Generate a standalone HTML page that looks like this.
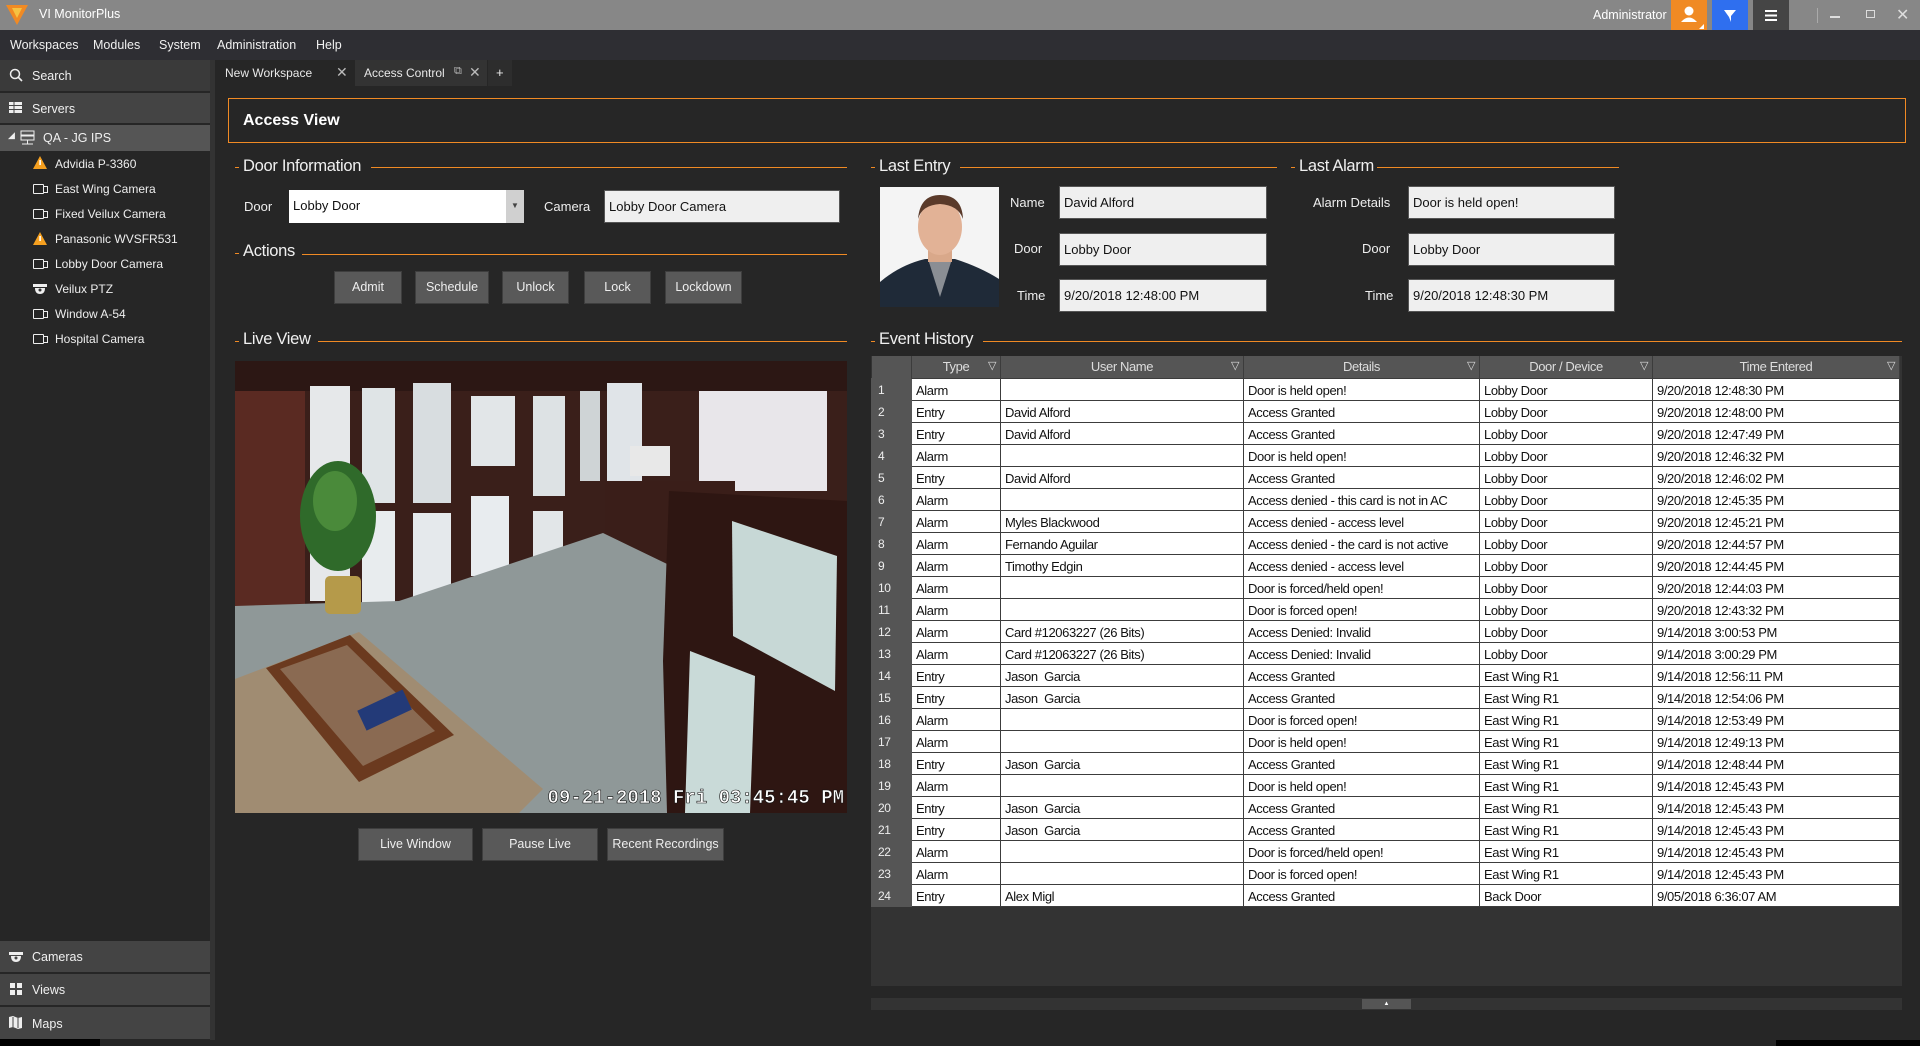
<!DOCTYPE html>
<html><head><meta charset="utf-8">
<style>
*{margin:0;padding:0;box-sizing:border-box}
body{width:1920px;height:1046px;overflow:hidden;background:#262626;font-family:"Liberation Sans",Arial,sans-serif;color:#e8e8e8;position:relative}
.a{position:absolute}
.title{left:0;top:0;width:1920px;height:30px;background:#878787}
.menu{left:0;top:30px;width:1920px;height:30px;background:#2e2e33;font-size:12.5px}
.menu span{position:absolute;top:8px;color:#f0f0f0}
.side{left:0;top:60px;width:210px;height:980px;background:#262626}
.sitem{position:absolute;left:0;width:210px;background:#444;font-size:12.5px;color:#f0f0f0}
.tree{position:absolute;left:55px;font-size:12px;color:#eee}
.ticon{position:absolute;left:33px;width:11px;height:10px;border:1.5px solid #eee;border-radius:1px}
.ticon:after{content:"";position:absolute;left:10px;top:1px;width:3px;height:5px;border:1.5px solid #eee;border-left:none}
.head{font-size:16.5px;color:#f0f0f0;letter-spacing:-0.3px}
.oline{height:1px;background:#f08a24}
.inp{background:#efefef;color:#111;font-size:13px;padding-left:4px;border:1px solid #555}
.btn{background:#595959;border:1px solid #3e3e3e;color:#eee;font-size:12.5px;text-align:center}
.lbl{font-size:13px;color:#eee}
table{border-collapse:collapse;font-size:13px;letter-spacing:-0.4px}
td{height:22px;background:#fff;color:#111;border:1px solid #3c3c3c;padding:2px 4px 0;white-space:nowrap;overflow:hidden}
td.n{background:#555;color:#eee;border-color:#555;padding-left:6px;font-size:12px}
th{height:22px;background:#555;color:#ddd;font-weight:normal;border-right:1px solid #3c3c3c;position:relative}
th i{position:absolute;right:4px;top:3px;font-style:normal;font-size:11px;color:#ddd}
</style></head><body>

<div class="a title">
 <svg class="a" style="left:5px;top:4px" width="24" height="22" viewBox="0 0 24 22"><path d="M1 1 L23 1 L12 21 Z" fill="#f08a24"/><path d="M7 4 L17 4 L12 14 Z" fill="#f5c242"/></svg>
 <span class="a" style="left:39px;top:7px;font-size:12.5px;color:#fff">VI MonitorPlus</span>
 <span class="a" style="left:1593px;top:8px;font-size:12.5px;color:#fff">Administrator</span>
 <div class="a" style="left:1671px;top:0;width:36px;height:30px;background:#f08a24"><svg width="36" height="30"><circle cx="18" cy="11" r="4.5" fill="#fff"/><path d="M10 22 Q18 13 26 22Z" fill="#fff"/><path d="M33 24 L33 29 L28 29Z" fill="#fff"/></svg></div>
 <div class="a" style="left:1712px;top:0;width:36px;height:30px;background:#2f6fef"><svg width="36" height="30"><path d="M12 10 L24 10 L19 16 L19 22 L17 17Z" fill="#fff"/></svg></div>
 <div class="a" style="left:1753px;top:0;width:36px;height:30px;background:#454545"><svg width="36" height="30"><rect x="12" y="10" width="12" height="2" fill="#fff"/><rect x="12" y="14.5" width="12" height="2" fill="#fff"/><rect x="12" y="19" width="12" height="2" fill="#fff"/></svg></div>
 <div class="a" style="left:1817px;top:8px;width:1px;height:15px;background:#aaa"></div>
 <div class="a" style="left:1830px;top:16px;width:10px;height:2px;background:#ddd"></div>
 <div class="a" style="left:1866px;top:10px;width:9px;height:8px;border:1.5px solid #ddd"></div>
 <span class="a" style="left:1896px;top:5px;font-size:16px;color:#ddd">✕</span>
</div>

<div class="a menu">
 <span style="left:10px">Workspaces</span><span style="left:93px">Modules</span><span style="left:159px">System</span><span style="left:217px">Administration</span><span style="left:316px">Help</span>
</div>

<div class="a side">
 <div class="sitem" style="top:0;height:31px;background:#3a3a3a"><svg class="a" style="left:9px;top:8px" width="14" height="14"><circle cx="6" cy="6" r="4.5" stroke="#eee" stroke-width="1.5" fill="none"/><path d="M9 9 L13 13" stroke="#eee" stroke-width="1.6"/></svg><span class="a" style="left:32px;top:9px">Search</span></div>
 <div class="sitem" style="top:33px;height:30px"><svg class="a" style="left:9px;top:9px" width="13" height="11"><rect width="13" height="11" fill="#eee"/><path d="M0 3.5H13M0 7.5H13M5 0V11" stroke="#444" stroke-width="1"/></svg><span class="a" style="left:32px;top:9px">Servers</span></div>
 <div class="sitem" style="top:65px;height:26px;background:#555"><span class="a" style="left:8px;top:5px;font-size:9px">◢</span><svg class="a" style="left:20px;top:5px" width="16" height="16"><rect x="1" y="1" width="13" height="4" fill="none" stroke="#eee"/><rect x="1" y="6" width="13" height="4" fill="none" stroke="#eee"/><path d="M7.5 10V14M2 14H13" stroke="#eee"/></svg><span class="a" style="left:43px;top:6px">QA - JG IPS</span></div>
</div>
<svg class="a" style="left:33px;top:156px" width="14" height="13"><path d="M7 0 L14 13 L0 13Z" fill="#f5a020"/><rect x="6.3" y="4" width="1.6" height="5" fill="#fff"/></svg>
<span class="tree" style="top:157px">Advidia P-3360</span>
<div class="ticon" style="top:184px"></div><span class="tree" style="top:182px">East Wing Camera</span>
<div class="ticon" style="top:209px"></div><span class="tree" style="top:207px">Fixed Veilux Camera</span>
<svg class="a" style="left:33px;top:232px" width="14" height="13"><path d="M7 0 L14 13 L0 13Z" fill="#f5a020"/><rect x="6.3" y="4" width="1.6" height="5" fill="#fff"/></svg>
<span class="tree" style="top:232px">Panasonic WVSFR531</span>
<div class="ticon" style="top:259px"></div><span class="tree" style="top:257px">Lobby Door Camera</span>
<svg class="a" style="left:33px;top:284px" width="14" height="10"><rect width="14" height="3" fill="#eee"/><path d="M2 4 H12 Q12 10 7 10 Q2 10 2 4Z" fill="#eee"/><circle cx="7" cy="6" r="1.5" fill="#333"/></svg>
<span class="tree" style="top:282px">Veilux PTZ</span>
<div class="ticon" style="top:309px"></div><span class="tree" style="top:307px">Window A-54</span>
<div class="ticon" style="top:334px"></div><span class="tree" style="top:332px">Hospital Camera</span>

<div class="a" style="left:210px;top:60px;width:5px;height:980px;background:#333"></div>
<div class="sitem" style="top:941px;height:31px"><svg class="a" style="left:9px;top:11px" width="14" height="10"><rect width="14" height="3" fill="#eee"/><path d="M2 4 H12 Q12 10 7 10 Q2 10 2 4Z" fill="#eee"/><circle cx="7" cy="6" r="1.5" fill="#444"/></svg><span class="a" style="left:32px;top:9px">Cameras</span></div>
<div class="sitem" style="top:974px;height:31px"><svg class="a" style="left:10px;top:9px" width="12" height="12"><rect width="5" height="5" fill="#eee"/><rect x="7" width="5" height="5" fill="#eee"/><rect y="7" width="5" height="5" fill="#eee"/><rect x="7" y="7" width="5" height="5" fill="#eee"/></svg><span class="a" style="left:32px;top:9px">Views</span></div>
<div class="sitem" style="top:1007px;height:32px"><svg class="a" style="left:9px;top:9px" width="13" height="13"><path d="M0 1 L4 0 L9 2 L13 1 L13 12 L9 13 L4 11 L0 12Z" fill="#eee"/><path d="M4 1V11M9 2V12" stroke="#444"/></svg><span class="a" style="left:32px;top:10px">Maps</span></div>
<div class="a" style="left:0;top:1039px;width:100px;height:7px;background:#000"></div>
<div class="a" style="left:1776px;top:1040px;width:144px;height:6px;background:#000"></div>

<div class="a" style="left:215px;top:60px;width:1705px;height:26px;background:#262626"></div>
<div class="a" style="left:215px;top:60px;width:138px;height:26px;background:#262626;font-size:12px"><span class="a" style="left:10px;top:6px">New Workspace</span><span class="a" style="left:121px;top:4px;font-size:14px;color:#bbb">✕</span></div>
<div class="a" style="left:355px;top:60px;width:132px;height:26px;background:#333;font-size:12px"><span class="a" style="left:9px;top:6px">Access Control</span><span class="a" style="left:99px;top:5px;font-size:11px;color:#bbb">⧉</span><span class="a" style="left:114px;top:4px;font-size:14px;color:#bbb">✕</span></div>
<div class="a" style="left:488px;top:60px;width:24px;height:26px;background:#2d2d2d;font-size:13px"><span class="a" style="left:8px;top:5px">+</span></div>

<div class="a" style="left:228px;top:98px;width:1678px;height:45px;border:1px solid #f08a24"><span class="a" style="left:14px;top:13px;font-size:16px;font-weight:bold;color:#fff">Access View</span></div>

<div class="a oline" style="left:235px;top:167px;width:4px"></div>
<span class="a head" style="left:243px;top:157px">Door Information</span>
<div class="a oline" style="left:371px;top:167px;width:476px"></div>
<span class="a lbl" style="left:244px;top:199px">Door</span>
<div class="a inp" style="left:289px;top:190px;width:235px;height:33px;background:#fff;line-height:31px;border:none">Lobby Door</div>
<div class="a" style="left:506px;top:190px;width:18px;height:33px;background:#d0d0d0"><span class="a" style="left:5px;top:11px;font-size:8px;color:#444">▼</span></div>
<span class="a lbl" style="left:544px;top:199px">Camera</span>
<div class="a inp" style="left:604px;top:190px;width:236px;height:33px;line-height:31px">Lobby Door Camera</div>

<div class="a oline" style="left:235px;top:253px;width:4px"></div>
<span class="a head" style="left:243px;top:242px">Actions</span>
<div class="a oline" style="left:302px;top:254px;width:545px"></div>
<div class="a btn" style="left:334px;top:271px;width:68px;height:33px;line-height:31px">Admit</div>
<div class="a btn" style="left:415px;top:271px;width:74px;height:33px;line-height:31px">Schedule</div>
<div class="a btn" style="left:502px;top:271px;width:67px;height:33px;line-height:31px">Unlock</div>
<div class="a btn" style="left:584px;top:271px;width:67px;height:33px;line-height:31px">Lock</div>
<div class="a btn" style="left:665px;top:271px;width:77px;height:33px;line-height:31px">Lockdown</div>

<div class="a oline" style="left:235px;top:341px;width:4px"></div>
<span class="a head" style="left:243px;top:330px">Live View</span>
<div class="a oline" style="left:318px;top:341px;width:529px"></div>

<svg class="a" style="left:235px;top:361px" width="612" height="452" viewBox="0 0 612 452">
 <rect width="612" height="452" fill="#3a1f1a"/>
 <rect x="0" y="0" width="612" height="30" fill="#2c1714"/>
 <rect x="0" y="30" width="70" height="220" fill="#5a2a22"/>
 <rect x="75" y="25" width="40" height="215" fill="#e6e8ea"/>
 <rect x="127" y="27" width="33" height="115" fill="#dfe4e6"/>
 <rect x="127" y="150" width="33" height="100" fill="#e8ecee"/>
 <rect x="178" y="22" width="38" height="120" fill="#d8dde0"/>
 <rect x="178" y="152" width="38" height="90" fill="#e5e9ec"/>
 <rect x="236" y="35" width="44" height="70" fill="#e2e6e8"/>
 <rect x="236" y="135" width="38" height="80" fill="#e8ecef"/>
 <rect x="298" y="35" width="32" height="100" fill="#dde2e4"/>
 <rect x="298" y="150" width="30" height="60" fill="#e2e6e8"/>
 <rect x="345" y="30" width="20" height="90" fill="#cfd4d6"/>
 <rect x="372" y="22" width="35" height="100" fill="#e0e4e8"/>
 <rect x="464" y="30" width="128" height="100" fill="#e8e6ea"/>
 <rect x="395" y="85" width="40" height="30" fill="#e8e8e8"/>
 <rect x="370" y="120" width="130" height="115" fill="#3a1e19"/>
 <polygon points="0,245 164,240 368,172 488,230 436,452 0,452" fill="#8f9898"/>
 <polygon points="0,318 124,271 308,428 284,452 0,452" fill="#a08c72"/>
 <polygon points="31,307 115,274 219,374 124,421" fill="#6b3a1f"/>
 <polygon points="45,308 112,284 200,370 128,405" fill="#8a6a52"/>
 <rect x="125" y="338" width="50" height="22" fill="#233a78" transform="rotate(-25 150 350)"/>
 <polygon points="434,130 612,140 612,452 432,452 428,300" fill="#2e1612"/>
 <polygon points="497,160 602,195 600,330 498,275" fill="#c7d8d6"/>
 <polygon points="455,290 520,315 515,452 450,452" fill="#c9dad8"/>
 <ellipse cx="103" cy="155" rx="38" ry="55" fill="#2f6a2a"/>
 <ellipse cx="100" cy="140" rx="22" ry="30" fill="#4a8a3a"/>
 <rect x="90" y="215" width="36" height="38" rx="5" fill="#b59a4a"/>
 <text x="609" y="442" text-anchor="end" font-family="Liberation Mono,monospace" font-size="19" font-weight="bold" fill="#fff" stroke="#111" stroke-width="0.6">09-21-2018 Fri 03:45:45 PM</text>
</svg>

<div class="a btn" style="left:358px;top:828px;width:115px;height:33px;line-height:31px">Live Window</div>
<div class="a btn" style="left:482px;top:828px;width:116px;height:33px;line-height:31px">Pause Live</div>
<div class="a btn" style="left:607px;top:828px;width:117px;height:33px;line-height:31px">Recent Recordings</div>

<div class="a oline" style="left:871px;top:167px;width:4px"></div>
<span class="a head" style="left:879px;top:157px">Last Entry</span>
<div class="a oline" style="left:960px;top:167px;width:317px"></div>
<svg class="a" style="left:880px;top:187px" width="119" height="120" viewBox="0 0 119 120">
 <rect width="119" height="120" fill="#f4f4f4"/>
 <path d="M0 120 L0 95 Q20 78 45 72 L75 72 Q100 80 119 92 L119 120Z" fill="#1f2a38"/>
 <path d="M48 72 L60 110 L72 72Z" fill="#8a8e94"/>
 <rect x="48" y="55" width="24" height="20" fill="#d9a88a"/>
 <ellipse cx="60" cy="40" rx="22" ry="28" fill="#e2b296"/>
 <path d="M38 32 Q40 8 60 8 Q82 8 83 32 Q78 18 60 17 Q42 18 38 32Z" fill="#5a3a2a"/>
</svg>
<span class="a lbl" style="left:1010px;top:195px">Name</span>
<div class="a inp" style="left:1059px;top:186px;width:208px;height:33px;line-height:31px">David Alford</div>
<span class="a lbl" style="left:1014px;top:241px">Door</span>
<div class="a inp" style="left:1059px;top:233px;width:208px;height:33px;line-height:31px">Lobby Door</div>
<span class="a lbl" style="left:1017px;top:288px">Time</span>
<div class="a inp" style="left:1059px;top:279px;width:208px;height:33px;line-height:31px">9/20/2018 12:48:00 PM</div>

<div class="a oline" style="left:1291px;top:167px;width:4px"></div>
<span class="a head" style="left:1299px;top:157px">Last Alarm</span>
<div class="a oline" style="left:1377px;top:167px;width:242px"></div>
<span class="a lbl" style="left:1313px;top:195px">Alarm Details</span>
<div class="a inp" style="left:1408px;top:186px;width:207px;height:33px;line-height:31px">Door is held open!</div>
<span class="a lbl" style="left:1362px;top:241px">Door</span>
<div class="a inp" style="left:1408px;top:233px;width:207px;height:33px;line-height:31px">Lobby Door</div>
<span class="a lbl" style="left:1365px;top:288px">Time</span>
<div class="a inp" style="left:1408px;top:279px;width:207px;height:33px;line-height:31px">9/20/2018 12:48:30 PM</div>

<div class="a oline" style="left:871px;top:341px;width:4px"></div>
<span class="a head" style="left:879px;top:330px">Event History</span>
<div class="a oline" style="left:983px;top:341px;width:919px"></div>

<div class="a" style="left:871px;top:356px;width:1031px;height:630px;background:#333"></div>
<table class="a" style="left:871px;top:356px;width:1028px;table-layout:fixed">
<colgroup><col style="width:40px"><col style="width:89px"><col style="width:243px"><col style="width:236px"><col style="width:173px"><col style="width:247px"></colgroup>
<tr><th></th><th>Type<i>▽</i></th><th>User Name<i>▽</i></th><th>Details<i>▽</i></th><th>Door / Device<i>▽</i></th><th>Time Entered<i>▽</i></th></tr>
<tr><td class="n">1</td><td>Alarm</td><td></td><td>Door is held open!</td><td>Lobby Door</td><td>9/20/2018 12:48:30 PM</td></tr>
<tr><td class="n">2</td><td>Entry</td><td>David Alford</td><td>Access Granted</td><td>Lobby Door</td><td>9/20/2018 12:48:00 PM</td></tr>
<tr><td class="n">3</td><td>Entry</td><td>David Alford</td><td>Access Granted</td><td>Lobby Door</td><td>9/20/2018 12:47:49 PM</td></tr>
<tr><td class="n">4</td><td>Alarm</td><td></td><td>Door is held open!</td><td>Lobby Door</td><td>9/20/2018 12:46:32 PM</td></tr>
<tr><td class="n">5</td><td>Entry</td><td>David Alford</td><td>Access Granted</td><td>Lobby Door</td><td>9/20/2018 12:46:02 PM</td></tr>
<tr><td class="n">6</td><td>Alarm</td><td></td><td>Access denied - this card is not in AC</td><td>Lobby Door</td><td>9/20/2018 12:45:35 PM</td></tr>
<tr><td class="n">7</td><td>Alarm</td><td>Myles Blackwood</td><td>Access denied - access level</td><td>Lobby Door</td><td>9/20/2018 12:45:21 PM</td></tr>
<tr><td class="n">8</td><td>Alarm</td><td>Fernando Aguilar</td><td>Access denied - the card is not active</td><td>Lobby Door</td><td>9/20/2018 12:44:57 PM</td></tr>
<tr><td class="n">9</td><td>Alarm</td><td>Timothy Edgin</td><td>Access denied - access level</td><td>Lobby Door</td><td>9/20/2018 12:44:45 PM</td></tr>
<tr><td class="n">10</td><td>Alarm</td><td></td><td>Door is forced/held open!</td><td>Lobby Door</td><td>9/20/2018 12:44:03 PM</td></tr>
<tr><td class="n">11</td><td>Alarm</td><td></td><td>Door is forced open!</td><td>Lobby Door</td><td>9/20/2018 12:43:32 PM</td></tr>
<tr><td class="n">12</td><td>Alarm</td><td>Card #12063227 (26 Bits)</td><td>Access Denied: Invalid</td><td>Lobby Door</td><td>9/14/2018 3:00:53 PM</td></tr>
<tr><td class="n">13</td><td>Alarm</td><td>Card #12063227 (26 Bits)</td><td>Access Denied: Invalid</td><td>Lobby Door</td><td>9/14/2018 3:00:29 PM</td></tr>
<tr><td class="n">14</td><td>Entry</td><td>Jason&nbsp; Garcia</td><td>Access Granted</td><td>East Wing R1</td><td>9/14/2018 12:56:11 PM</td></tr>
<tr><td class="n">15</td><td>Entry</td><td>Jason&nbsp; Garcia</td><td>Access Granted</td><td>East Wing R1</td><td>9/14/2018 12:54:06 PM</td></tr>
<tr><td class="n">16</td><td>Alarm</td><td></td><td>Door is forced open!</td><td>East Wing R1</td><td>9/14/2018 12:53:49 PM</td></tr>
<tr><td class="n">17</td><td>Alarm</td><td></td><td>Door is held open!</td><td>East Wing R1</td><td>9/14/2018 12:49:13 PM</td></tr>
<tr><td class="n">18</td><td>Entry</td><td>Jason&nbsp; Garcia</td><td>Access Granted</td><td>East Wing R1</td><td>9/14/2018 12:48:44 PM</td></tr>
<tr><td class="n">19</td><td>Alarm</td><td></td><td>Door is held open!</td><td>East Wing R1</td><td>9/14/2018 12:45:43 PM</td></tr>
<tr><td class="n">20</td><td>Entry</td><td>Jason&nbsp; Garcia</td><td>Access Granted</td><td>East Wing R1</td><td>9/14/2018 12:45:43 PM</td></tr>
<tr><td class="n">21</td><td>Entry</td><td>Jason&nbsp; Garcia</td><td>Access Granted</td><td>East Wing R1</td><td>9/14/2018 12:45:43 PM</td></tr>
<tr><td class="n">22</td><td>Alarm</td><td></td><td>Door is forced/held open!</td><td>East Wing R1</td><td>9/14/2018 12:45:43 PM</td></tr>
<tr><td class="n">23</td><td>Alarm</td><td></td><td>Door is forced open!</td><td>East Wing R1</td><td>9/14/2018 12:45:43 PM</td></tr>
<tr><td class="n">24</td><td>Entry</td><td>Alex Migl</td><td>Access Granted</td><td>Back Door</td><td>9/05/2018 6:36:07 AM</td></tr>
</table>

<div class="a" style="left:871px;top:998px;width:1031px;height:12px;background:#333"></div>
<div class="a" style="left:1362px;top:999px;width:49px;height:10px;background:#555;font-size:6px;color:#fff;text-align:center;line-height:10px">▲</div>
</body></html>
